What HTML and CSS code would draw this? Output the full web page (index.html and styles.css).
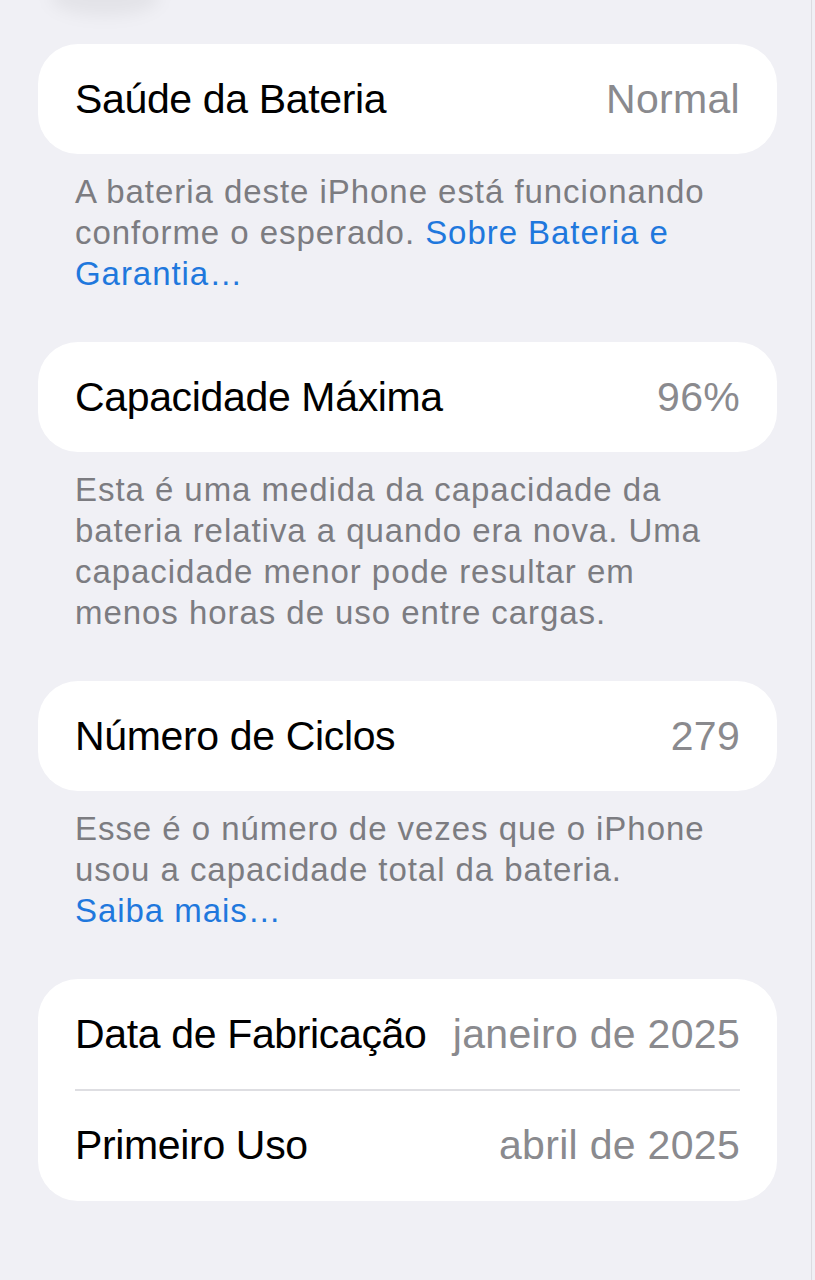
FILE: index.html
```html
<!DOCTYPE html>
<html lang="pt-BR">
<head>
<meta charset="utf-8">
<title>Bateria</title>
<link rel="stylesheet" href="styles.css">
</head>
<body>
<main class="settings">
  <section class="group">
    <div class="card">
      <div class="row"><span class="label">Saúde da Bateria</span><span class="value">Normal</span></div>
    </div>
    <p class="footer">A bateria deste iPhone está funcionando conforme o esperado. <span class="link">Sobre Bateria e Garantia…</span></p>
  </section>

  <section class="group">
    <div class="card">
      <div class="row"><span class="label">Capacidade Máxima</span><span class="value">96%</span></div>
    </div>
    <p class="footer">Esta é uma medida da capacidade da bateria relativa a quando era nova. Uma capacidade menor pode resultar em menos horas de uso entre cargas.</p>
  </section>

  <section class="group">
    <div class="card">
      <div class="row"><span class="label">Número de Ciclos</span><span class="value">279</span></div>
    </div>
    <p class="footer">Esse é o número de vezes que o iPhone usou a capacidade total da bateria.<br><span class="link">Saiba mais…</span></p>
  </section>

  <section class="group">
    <div class="card">
      <div class="row"><span class="label">Data de Fabricação</span><span class="value">janeiro de 2025</span></div>
      <div class="divider"></div>
      <div class="row"><span class="label">Primeiro Uso</span><span class="value">abril de 2025</span></div>
    </div>
  </section>
</main>
</body>
</html>
```
FILE: styles.css
```css
html, body {
  margin: 0;
  padding: 0;
}

body {
  position: relative;
  min-height: 1280px;
  background: #f0f0f5;
  font-family: "Liberation Sans", Arial, sans-serif;
  overflow: hidden;
}

body::before {
  content: "";
  position: absolute;
  left: 50px;
  top: -22px;
  width: 110px;
  height: 38px;
  border-radius: 50%;
  background: rgba(0, 0, 0, 0.05);
  filter: blur(8px);
}

body::after {
  content: "";
  position: absolute;
  top: 0;
  bottom: 0;
  right: 3px;
  width: 1px;
  background: #dcdce1;
}

.settings {
  padding: 44px 38px 0 38px;
  display: flex;
  flex-direction: column;
}

.card {
  background: #ffffff;
  border-radius: 40px;
  overflow: hidden;
}

.row {
  height: 110px;
  padding: 0 37px;
  display: flex;
  align-items: center;
  justify-content: space-between;
  gap: 20px;
  font-size: 41px;
  white-space: nowrap;
}

.label {
  color: #000000;
  letter-spacing: -0.35px;
}

.value {
  color: #8a8a8e;
  letter-spacing: 0.3px;
}

.divider {
  height: 1.5px;
  margin: 0 37px;
  background: #dedee2;
}

.footer {
  margin: 0 0 48px 0;
  padding: 17px 37px 0 37px;
  font-size: 33px;
  line-height: 41px;
  letter-spacing: 0.95px;
  color: #7c7c81;
}

.link {
  color: #1f78dd;
}
```
